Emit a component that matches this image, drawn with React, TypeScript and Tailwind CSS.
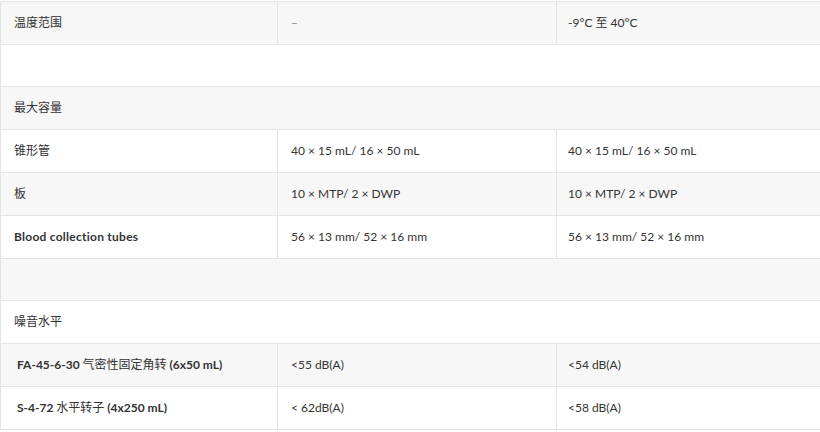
import React from 'react'

type Row = {
  cells: React.ReactNode[]
  bg: string
  h: string
  first?: string
}

const font = { fontFamily: 'Lato, "Noto Sans CJK SC", sans-serif' }

const rows: Row[] = [
  { cells: ['温度范围', <span className="text-[#888]">–</span>, '-9°C 至 40°C'], bg: 'bg-[#f7f7f7]', h: 'h-[43px]' },
  { cells: [''], bg: 'bg-white', h: 'h-[42px]' },
  { cells: ['最大容量'], bg: 'bg-[#f7f7f7]', h: 'h-[43px]' },
  { cells: ['锥形管', '40 × 15 mL/ 16 × 50 mL', '40 × 15 mL/ 16 × 50 mL'], bg: 'bg-white', h: 'h-[43px]' },
  { cells: ['板', '10 × MTP/ 2 × DWP', '10 × MTP/ 2 × DWP'], bg: 'bg-[#f7f7f7]', h: 'h-[43px]' },
  {
    cells: ['Blood collection tubes', '56 × 13 mm/ 52 × 16 mm', '56 × 13 mm/ 52 × 16 mm'],
    bg: 'bg-white',
    h: 'h-[43px]',
    first: 'font-bold tracking-[0.25px] pl-[13px]',
  },
  { cells: [''], bg: 'bg-[#f7f7f7]', h: 'h-[42px]' },
  { cells: ['噪音水平'], bg: 'bg-white', h: 'h-[43px]' },
  {
    cells: [
      <>FA-45-6-30 <span className="font-normal">气密性固定角转</span> (6x50 mL)</>,
      '<55 dB(A)',
      '<54 dB(A)',
    ],
    bg: 'bg-[#f7f7f7]',
    h: 'h-[43px]',
    first: 'font-bold pl-[16px]',
  },
  {
    cells: [
      <>S-4-72 <span className="font-normal">水平转子</span> (4x250 mL)</>,
      '< 62dB(A)',
      '<58 dB(A)',
    ],
    bg: 'bg-white',
    h: 'h-[43px]',
    first: 'font-bold pl-[16px]',
  },
]

export default function App() {
  return (
    <div className="w-[820px] h-[432px] overflow-hidden bg-white pt-px" style={font}>
      <div className="w-[834px] border-l border-t border-[#e4e4e4] text-[12px] text-[#333]">
        {rows.map((r, i) => (
          <div key={i} className={`flex border-b border-[#e4e4e4] ${r.bg} ${r.h}`}>
            {r.cells.length === 1 ? (
              <div className="flex items-center px-[13px] flex-1">{r.cells[0]}</div>
            ) : (
              <>
                <div className={`flex items-center w-[277px] border-r border-[#e4e4e4] ${r.first ?? 'pl-[13px]'}`}>
                  <span className="whitespace-pre">{r.cells[0]}</span>
                </div>
                <div className="flex items-center w-[279px] border-r border-[#e4e4e4] pl-[13px]">
                  <span className="whitespace-pre">{r.cells[1]}</span>
                </div>
                <div className="flex items-center flex-1 pl-[11px]">
                  <span className="whitespace-pre">{r.cells[2]}</span>
                </div>
              </>
            )}
          </div>
        ))}
      </div>
    </div>
  )
}
